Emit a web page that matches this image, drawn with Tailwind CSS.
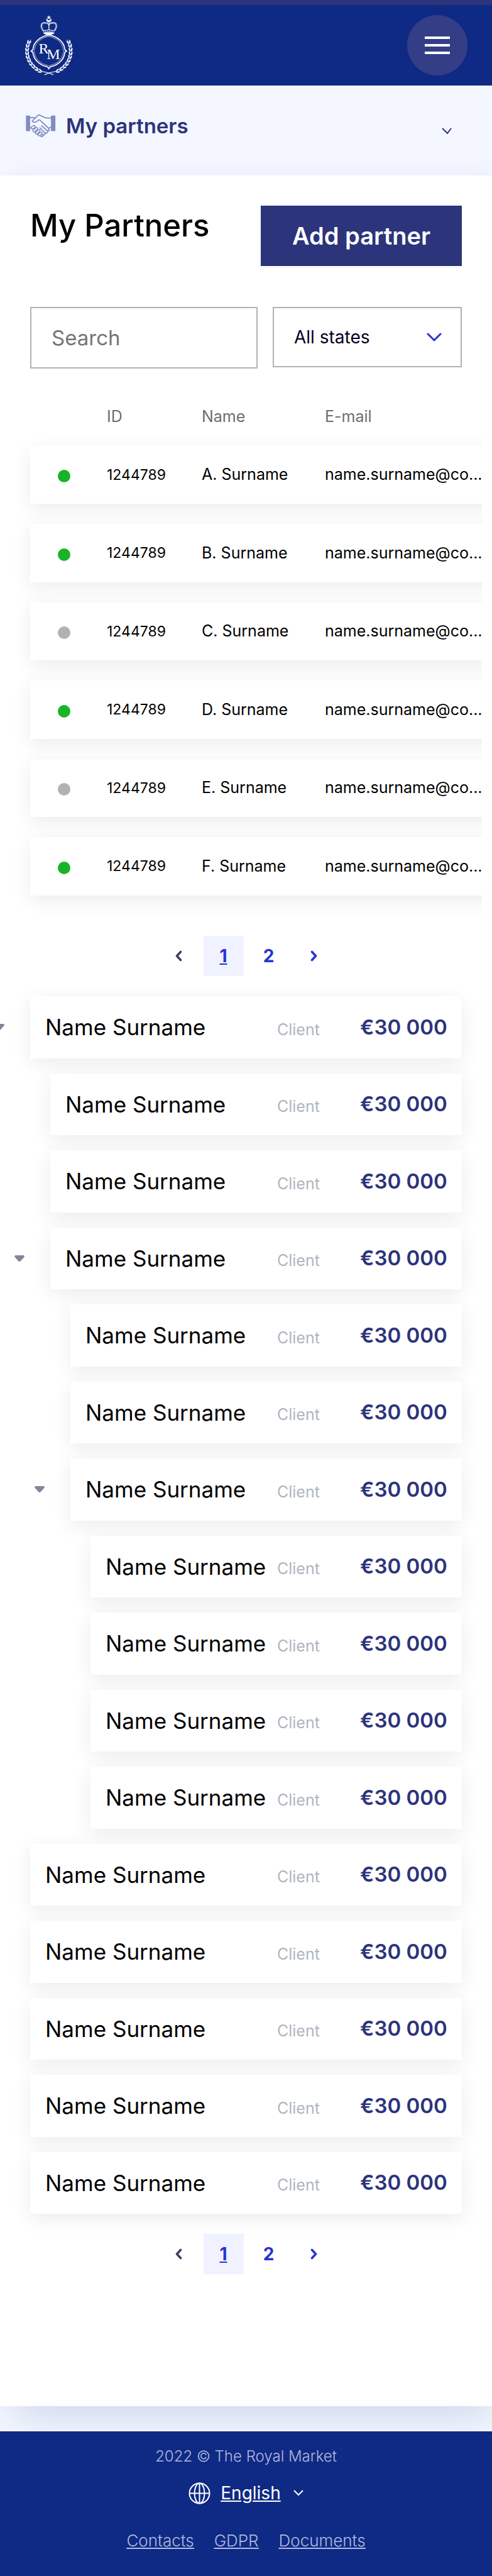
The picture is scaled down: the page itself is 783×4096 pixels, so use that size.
<!DOCTYPE html>
<html lang="en">
<head>
<meta charset="utf-8">
<meta name="viewport" content="width=device-width, initial-scale=1">
<title>My Partners – The Royal Market</title>
<script src="https://cdn.jsdelivr.net/npm/@tailwindcss/browser@4"></script>
</head>
<body class="bg-[#f4f7ff] font-['Inter','Noto_Sans',sans-serif] text-black overflow-x-hidden">

<svg class="hidden" aria-hidden="true">
  <symbol id="prev" viewBox="0 0 12 18"><path d="M9.500 2.500L3.500 9l6 6.500" fill="none" stroke="currentColor" stroke-width="3.600" stroke-linecap="round" stroke-linejoin="round"/></symbol>
  <symbol id="next" viewBox="0 0 12 18"><path d="M2.500 2.500L8.500 9l-6 6.500" fill="none" stroke="currentColor" stroke-width="3.600" stroke-linecap="round" stroke-linejoin="round"/></symbol>
  <symbol id="caret" viewBox="0 0 16 10"><path d="M2 0h12q3 .6 1.300 3L10 9q-2 2-4 0L.7 3Q-1 .6 2 0z" fill="currentColor"/></symbol>
</svg>

<header class="relative z-10 flex items-center justify-between border-t-8 border-[#2c347b] bg-[#0f2a84] px-10 py-4">
  <a href="#" aria-label="The Royal Market">
    <svg class="h-24 w-[76px]" viewBox="60 46 340 430" fill="none" stroke="#fff">
      <defs>
        <g id="leaves" fill="#fff" stroke="none">
          <path d="M387 314q15-10 10-32q-15 10-10 32z"/>
          <path d="M383 312q-15-10-11-32q15 12 11 32z"/>
        </g>
        <g id="branch">
          <use href="#leaves" transform="rotate(-22 229 302)"/>
          <use href="#leaves" transform="rotate(-12 229 302)"/>
          <use href="#leaves" transform="rotate(-2 229 302)"/>
          <use href="#leaves" transform="rotate(8 229 302)"/>
          <use href="#leaves" transform="rotate(18 229 302)"/>
          <use href="#leaves" transform="rotate(28 229 302)"/>
          <use href="#leaves" transform="rotate(38 229 302)"/>
          <use href="#leaves" transform="rotate(48 229 302)"/>
          <use href="#leaves" transform="rotate(58 229 302)"/>
          <use href="#leaves" transform="rotate(68 229 302)"/>
          <path d="M358 220q8 10 11 24" stroke-width="4"/>
          <path d="M285 446q-28 6-54 12l-34 13" stroke-width="5"/>
        </g>
      </defs>
      <path d="M229 47l4 10 11 1-8 7 3 11-10-6-10 6 3-11-8-7 11-1z" fill="#fff" stroke="none"/>
      <path d="M215 70a17 17 0 1 0 28 0a14 14 0 1 1-28 0z" fill="#fff" stroke-width="2"/>
      <path d="M190 158C168 128 172 101 198 101Q220 101 229 112Q238 101 260 101C286 101 290 128 268 158" stroke-width="11" stroke-dasharray="8 2"/>
      <path d="M190 158C168 128 172 101 198 101Q220 101 229 112Q238 101 260 101C286 101 290 128 268 158" stroke="#0f2a84" stroke-width="3" stroke-dasharray="4 6"/>
      <path d="M229 108v46" stroke-width="7" stroke-dasharray="7 2"/>
      <path d="M188 157q41-12 82 0M190 172q39-10 78 0" stroke-width="4"/>
      <path d="M190 165q39-10 78 0" stroke-width="7" stroke-dasharray="6 7"/>
      <path d="M189 174q40-10 80 0q-6 10-26 12h-28q-20-2-26-12z" fill="#fff" stroke="none"/>
      <path d="M229 188C170 196 120 240 117 284Q115 296 104 302Q115 308 117 320C122 366 170 404 211 412Q224 416 229 427Q234 416 247 412C288 404 336 366 341 320Q343 308 354 302Q343 296 341 284C338 240 288 196 229 188z" stroke-width="8"/>
      <path d="M229 198C180 206 134 240 128 286Q127 296 122 302Q127 308 128 318C134 362 180 396 214 402Q224 404 229 410Q234 404 244 402C278 396 324 362 330 318Q331 308 336 302Q331 296 330 286C324 240 278 206 229 198z" stroke-width="3"/>
      <use href="#branch"/>
      <use href="#branch" transform="matrix(-1 0 0 1 458 0)"/>
      <text x="156" y="318" fill="#fff" stroke="none" font-size="108" font-family="Liberation Serif, serif">R</text>
      <text x="213" y="359" fill="#fff" stroke="none" font-size="108" font-family="Liberation Serif, serif">M</text>
    </svg>
  </a>
  <button type="button" aria-label="Open menu" class="-mr-px flex size-24 flex-col items-center justify-center gap-2 rounded-full bg-[#333e87]">
    <span class="h-1 w-10 bg-white"></span>
    <span class="h-1 w-10 bg-white"></span>
    <span class="h-1 w-10 bg-white"></span>
  </button>
</header>

<nav class="px-10 pt-11 pb-[59px]">
  <button type="button" class="flex h-10 w-full items-center gap-4 pr-6 text-left text-[#2c347b]">
    <svg class="h-[38px] w-[49px]" viewBox="58 64 220 172" fill="none" stroke="#7f8dc4" stroke-width="8" stroke-linecap="round" stroke-linejoin="round">
      <path d="M63 80q0-3 3-3h24q3 0 3 3v106q0 3-3 3H66q-3 0-3-3zM243 80q0-3 3-3h26q3 0 3 3v106q0 3-3 3h-26q-3 0-3-3z" fill="#7f8dc4" stroke="none"/>
      <path d="M93 92h38M243 94h-36L158 72q-4-1-7 2L108 115q4 11 20 9 14-3 22-12 6-6 13-3l62 58q10 10 4 17-6 6-14 0M93 165h9M243 160q-8-1-13 8"/>
      <path d="M102 166q-2-5 2-9l12-8q9-4 13 2 3 6-2 11l-12 10q-10 3-13-6zM112 184l22-20q8-4 12 2 3 6-2 11l-17 16q-11 4-15-9zM129 199l22-20q8-4 12 2 3 6-2 11l-17 16q-11 4-15-9zM148 213l18-16q8-4 12 2 3 6-2 11l-12 12q-14 2-16-9z" stroke-width="7"/>
      <path d="M176 150l40 36q6 12-4 17-8 2-14-4l-34-34M198 200q4 12-6 16-6 2-14-4M190 218q-6 12-20 8"/>
    </svg>
    <span class="text-[33px] leading-10 font-semibold">My partners</span>
    <svg class="mt-4 ml-auto h-3 w-4" viewBox="0 0 16 12" fill="none" stroke="currentColor" stroke-width="2"><path d="M1 2l8 8 6-8"/></svg>
  </button>
</nav>

<main class="bg-white px-12 pt-12 pb-[210px] shadow-[10px_20px_60px_-10px_rgba(15,42,132,0.18)]">
  <div class="flex items-start justify-between">
    <h1 class="text-[49px] leading-16 font-medium">My Partners</h1>
    <button type="button" class="h-24 w-80 bg-[#2c347b] text-[38px] font-semibold text-white">Add partner</button>
  </div>

  <form class="mt-[65px] flex items-start gap-6">
    <input type="search" aria-label="Search" placeholder="Search" class="h-[98px] min-w-0 flex-1 border-2 border-[#b2b2b2] px-8 text-[33px] placeholder:text-[#757575]">
    <div class="relative w-[301px]">
      <select aria-label="State" class="h-24 w-full appearance-none border-2 border-[#b2b2b2] bg-white px-8 text-[28px] text-[#00001a]">
        <option>All states</option>
      </select>
      <svg class="pointer-events-none absolute top-10 right-8 h-4 w-6 text-[#2733d6]" viewBox="0 0 24 16" fill="none" stroke="currentColor" stroke-width="3" stroke-linecap="round" stroke-linejoin="round"><path d="M2 3l10 10L22 3"/></svg>
    </div>
  </form>

  <div class="-mx-8 mt-[29px] overflow-x-auto pl-8 [scrollbar-width:none]">
    <table class="w-[1100px] table-fixed border-separate border-spacing-x-0 border-spacing-y-8 text-left text-[25px]">
      <colgroup><col class="w-[122px]"><col class="w-[151px]"><col class="w-[196px]"><col></colgroup>
      <thead>
        <tr class="h-[30px] leading-[30px] text-[#6e6e6e]"><th class="p-0 font-normal" aria-label="Status"></th><th class="p-0 font-normal">ID</th><th class="p-0 font-normal">Name</th><th class="p-0 font-normal">E-mail</th></tr>
      </thead>
      <tbody>
        <tr class="h-[92px] bg-white shadow-[0_8px_30px_rgba(0,0,0,0.08)]"><td class="p-0 pl-11"><span class="mt-1 block size-5 rounded-full bg-[#17b526]"></span></td><td class="p-0 text-[23px]">1244789</td><td class="p-0">A. Surname</td><td class="p-0">name.surname@co...</td></tr>
        <tr class="h-[93px] bg-white shadow-[0_8px_30px_rgba(0,0,0,0.08)]"><td class="p-0 pl-11"><span class="mt-1 block size-5 rounded-full bg-[#17b526]"></span></td><td class="p-0 text-[23px]">1244789</td><td class="p-0">B. Surname</td><td class="p-0">name.surname@co...</td></tr>
        <tr class="h-[92px] bg-white shadow-[0_8px_30px_rgba(0,0,0,0.08)]"><td class="p-0 pl-11"><span class="mt-1 block size-5 rounded-full bg-[#b2b2b2]"></span></td><td class="p-0 text-[23px]">1244789</td><td class="p-0">C. Surname</td><td class="p-0">name.surname@co...</td></tr>
        <tr class="h-[93px] bg-white shadow-[0_8px_30px_rgba(0,0,0,0.08)]"><td class="p-0 pl-11"><span class="mt-1 block size-5 rounded-full bg-[#17b526]"></span></td><td class="p-0 text-[23px]">1244789</td><td class="p-0">D. Surname</td><td class="p-0">name.surname@co...</td></tr>
        <tr class="h-[92px] bg-white shadow-[0_8px_30px_rgba(0,0,0,0.08)]"><td class="p-0 pl-11"><span class="mt-1 block size-5 rounded-full bg-[#b2b2b2]"></span></td><td class="p-0 text-[23px]">1244789</td><td class="p-0">E. Surname</td><td class="p-0">name.surname@co...</td></tr>
        <tr class="h-[93px] bg-white shadow-[0_8px_30px_rgba(0,0,0,0.08)]"><td class="p-0 pl-11"><span class="mt-1 block size-5 rounded-full bg-[#17b526]"></span></td><td class="p-0 text-[23px]">1244789</td><td class="p-0">F. Surname</td><td class="p-0">name.surname@co...</td></tr>
      </tbody>
    </table>
  </div>

  <nav aria-label="Partner pages" class="mt-8 flex justify-center gap-2 text-[28px] font-bold text-[#2733d6]">
    <a href="#" aria-label="Previous page" class="flex size-16 items-center justify-center text-[#3d4066]"><svg class="h-[18px] w-3"><use href="#prev"/></svg></a>
    <a href="#" aria-current="page" class="flex size-16 items-center justify-center bg-[#f0f3ff] underline">1</a>
    <a href="#" class="flex size-16 items-center justify-center">2</a>
    <a href="#" aria-label="Next page" class="flex size-16 items-center justify-center"><svg class="h-[18px] w-3"><use href="#next"/></svg></a>
  </nav>

  <ul class="relative mt-8 grid min-h-[1936px] auto-rows-fr gap-6 text-[35px] [&>li]:relative [&>li]:flex [&>li]:items-center [&>li]:bg-white [&>li]:px-6 [&>li]:shadow-[0_8px_30px_rgba(0,0,0,0.08)]">
    <li><button type="button" aria-label="Collapse" class="absolute right-full mr-[41px] text-[#838799]"><svg class="h-2.5 w-4"><use href="#caret"/></svg></button><span class="flex-1">Name Surname</span><span class="w-[132px] pt-2 text-[25px] text-[#aeb6be]">Client</span><b class="w-[138px] text-right text-[33px] font-semibold whitespace-nowrap text-[#2c347b]">€30 000</b></li>
    <li class="ml-8"><span class="flex-1">Name Surname</span><span class="w-[132px] pt-2 text-[25px] text-[#aeb6be]">Client</span><b class="w-[138px] text-right text-[33px] font-semibold whitespace-nowrap text-[#2c347b]">€30 000</b></li>
    <li class="ml-8"><span class="flex-1">Name Surname</span><span class="w-[132px] pt-2 text-[25px] text-[#aeb6be]">Client</span><b class="w-[138px] text-right text-[33px] font-semibold whitespace-nowrap text-[#2c347b]">€30 000</b></li>
    <li class="ml-8"><button type="button" aria-label="Collapse" class="absolute right-full mr-[41px] text-[#838799]"><svg class="h-2.5 w-4"><use href="#caret"/></svg></button><span class="flex-1">Name Surname</span><span class="w-[132px] pt-2 text-[25px] text-[#aeb6be]">Client</span><b class="w-[138px] text-right text-[33px] font-semibold whitespace-nowrap text-[#2c347b]">€30 000</b></li>
    <li class="ml-16"><span class="flex-1">Name Surname</span><span class="w-[132px] pt-2 text-[25px] text-[#aeb6be]">Client</span><b class="w-[138px] text-right text-[33px] font-semibold whitespace-nowrap text-[#2c347b]">€30 000</b></li>
    <li class="ml-16"><span class="flex-1">Name Surname</span><span class="w-[132px] pt-2 text-[25px] text-[#aeb6be]">Client</span><b class="w-[138px] text-right text-[33px] font-semibold whitespace-nowrap text-[#2c347b]">€30 000</b></li>
    <li class="ml-16"><button type="button" aria-label="Collapse" class="absolute right-full mr-[41px] text-[#838799]"><svg class="h-2.5 w-4"><use href="#caret"/></svg></button><span class="flex-1">Name Surname</span><span class="w-[132px] pt-2 text-[25px] text-[#aeb6be]">Client</span><b class="w-[138px] text-right text-[33px] font-semibold whitespace-nowrap text-[#2c347b]">€30 000</b></li>
    <li class="ml-24"><span class="flex-1 whitespace-nowrap">Name Surname</span><span class="w-[132px] pt-2 text-[25px] text-[#aeb6be]">Client</span><b class="w-[138px] text-right text-[33px] font-semibold whitespace-nowrap text-[#2c347b]">€30 000</b></li>
    <li class="ml-24"><span class="flex-1 whitespace-nowrap">Name Surname</span><span class="w-[132px] pt-2 text-[25px] text-[#aeb6be]">Client</span><b class="w-[138px] text-right text-[33px] font-semibold whitespace-nowrap text-[#2c347b]">€30 000</b></li>
    <li class="ml-24"><span class="flex-1 whitespace-nowrap">Name Surname</span><span class="w-[132px] pt-2 text-[25px] text-[#aeb6be]">Client</span><b class="w-[138px] text-right text-[33px] font-semibold whitespace-nowrap text-[#2c347b]">€30 000</b></li>
    <li class="ml-24"><span class="flex-1 whitespace-nowrap">Name Surname</span><span class="w-[132px] pt-2 text-[25px] text-[#aeb6be]">Client</span><b class="w-[138px] text-right text-[33px] font-semibold whitespace-nowrap text-[#2c347b]">€30 000</b></li>
    <li><span class="flex-1">Name Surname</span><span class="w-[132px] pt-2 text-[25px] text-[#aeb6be]">Client</span><b class="w-[138px] text-right text-[33px] font-semibold whitespace-nowrap text-[#2c347b]">€30 000</b></li>
    <li><span class="flex-1">Name Surname</span><span class="w-[132px] pt-2 text-[25px] text-[#aeb6be]">Client</span><b class="w-[138px] text-right text-[33px] font-semibold whitespace-nowrap text-[#2c347b]">€30 000</b></li>
    <li><span class="flex-1">Name Surname</span><span class="w-[132px] pt-2 text-[25px] text-[#aeb6be]">Client</span><b class="w-[138px] text-right text-[33px] font-semibold whitespace-nowrap text-[#2c347b]">€30 000</b></li>
    <li><span class="flex-1">Name Surname</span><span class="w-[132px] pt-2 text-[25px] text-[#aeb6be]">Client</span><b class="w-[138px] text-right text-[33px] font-semibold whitespace-nowrap text-[#2c347b]">€30 000</b></li>
    <li><span class="flex-1">Name Surname</span><span class="w-[132px] pt-2 text-[25px] text-[#aeb6be]">Client</span><b class="w-[138px] text-right text-[33px] font-semibold whitespace-nowrap text-[#2c347b]">€30 000</b></li>
  </ul>

  <nav aria-label="Client pages" class="relative mt-8 flex justify-center gap-2 text-[28px] font-bold text-[#2733d6]">
    <a href="#" aria-label="Previous page" class="flex size-16 items-center justify-center text-[#3d4066]"><svg class="h-[18px] w-3"><use href="#prev"/></svg></a>
    <a href="#" aria-current="page" class="flex size-16 items-center justify-center bg-[#f0f3ff] underline">1</a>
    <a href="#" class="flex size-16 items-center justify-center">2</a>
    <a href="#" aria-label="Next page" class="flex size-16 items-center justify-center"><svg class="h-[18px] w-3"><use href="#next"/></svg></a>
  </nav>
</main>

<footer class="relative mt-10 flex flex-col items-center bg-[#0f2a84] pt-6 pb-10 font-light text-[#b1b9df]">
  <p class="text-2xl leading-8">2022 © The Royal Market</p>
  <button type="button" class="mt-6 flex h-9 items-center gap-4 text-[28px] font-normal text-white">
    <svg class="size-[35px]" viewBox="0 0 35 35" fill="none" stroke="currentColor" stroke-width="2"><circle cx="17.500" cy="17.500" r="16"/><ellipse cx="17.500" cy="17.500" rx="8" ry="16"/><path d="M17.500 1v33M1 17.500h33"/></svg>
    <span class="underline">English</span>
    <svg class="ml-1 h-2.5 w-4" viewBox="0 0 16 10" fill="none" stroke="currentColor" stroke-width="2"><path d="M1 1l7 7 7-7"/></svg>
  </button>
  <nav aria-label="Footer" class="mt-[42px] flex gap-8 text-[26px] leading-8 underline">
    <a href="#">Contacts</a>
    <a href="#">GDPR</a>
    <a href="#">Documents</a>
  </nav>
</footer>
</body>
</html>
